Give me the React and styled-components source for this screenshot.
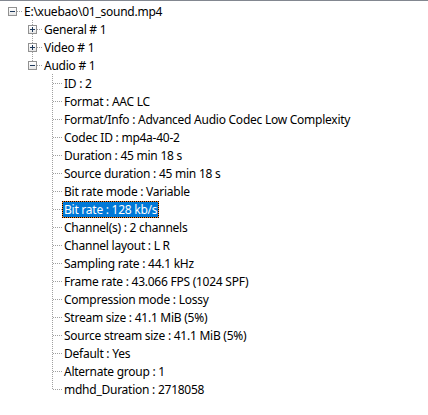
import React from 'react';
import styled, { createGlobalStyle, css } from 'styled-components';

const GlobalStyle = createGlobalStyle`
  html, body {
    margin: 0;
    padding: 0;
    background: #fff;
  }
`;

const LINE = '#a0a0a0';
const vDots = `repeating-linear-gradient(to bottom, ${LINE} 0 1px, transparent 1px 2px)`;
const hDots = `repeating-linear-gradient(to right, ${LINE} 0 1px, transparent 1px 2px)`;

const TreeView = styled.div`
  box-sizing: border-box;
  width: 428px;
  height: 415px;
  border-top: 1px solid #828790;
  padding: 1px 0 0 2px;
  background: #fff;
  font-family: "Segoe UI", "Noto Sans", "Open Sans", sans-serif;
  font-size: 12px;
  letter-spacing: -0.25px;
  color: #000;
  overflow: hidden;
`;

const Row = styled.div`
  display: flex;
  align-items: center;
  height: 18px;
  padding-left: ${(p) => p.$level * 20}px;
`;

const Gutter = styled.span`
  flex: none;
  width: 20px;
  height: 18px;
  display: flex;
  align-items: center;
  justify-content: center;
  ${(p) => {
    const layers = [`${hDots} 11px 9px / 9px 1px no-repeat`];
    if (!p.$root) {
      layers.push(`${vDots} 10px 0 / 1px ${p.$last ? 10 : 18}px no-repeat`);
    }
    return css`background: ${layers.join(', ')};`;
  }}
`;

const Expander = styled.span`
  position: relative;
  box-sizing: border-box;
  width: 9px;
  height: 9px;
  margin-left: 1px;
  border: 1px solid #919191;
  background: linear-gradient(to bottom, #fff, #e6e6e6);

  &::before {
    content: '';
    position: absolute;
    left: 1px;
    top: 3px;
    width: 5px;
    height: 1px;
    background: #1e395b;
  }

  ${(p) =>
    !p.$open &&
    css`
      &::after {
        content: '';
        position: absolute;
        left: 3px;
        top: 1px;
        width: 1px;
        height: 5px;
        background: #1e395b;
      }
    `}
`;

const Label = styled.span`
  box-sizing: border-box;
  height: 17px;
  line-height: 17px;
  padding: 0 2px;
  white-space: nowrap;

  ${(p) =>
    p.$selected &&
    css`
      background: #0078d7;
      color: #fff;
      outline: 1px dotted #000;
      outline-offset: -1px;
      box-shadow: inset 0 0 0 1px #ff8a28;
    `}
`;

const audioFields = [
  'ID : 2',
  'Format : AAC LC',
  'Format/Info : Advanced Audio Codec Low Complexity',
  'Codec ID : mp4a-40-2',
  'Duration : 45 min 18 s',
  'Source duration : 45 min 18 s',
  'Bit rate mode : Variable',
  'Bit rate : 128 kb/s',
  'Channel(s) : 2 channels',
  'Channel layout : L R',
  'Sampling rate : 44.1 kHz',
  'Frame rate : 43.066 FPS (1024 SPF)',
  'Compression mode : Lossy',
  'Stream size : 41.1 MiB (5%)',
  'Source stream size : 41.1 MiB (5%)',
  'Default : Yes',
  'Alternate group : 1',
  'mdhd_Duration : 2718058',
];

const tree = {
  label: 'E:\\xuebao\\01_sound.mp4',
  open: true,
  children: [
    { label: 'General # 1', open: false, children: [] },
    { label: 'Video # 1', open: false, children: [] },
    {
      label: 'Audio # 1',
      open: true,
      children: audioFields.map((label) => ({ label })),
    },
  ],
};

function TreeNode({ node, level, last, root }) {
  const hasChildren = !!node.children;
  const kids = node.open && node.children ? node.children : [];
  return (
    <>
      <Row $level={level}>
        <Gutter $root={root} $last={last}>
          {hasChildren && <Expander $open={node.open} />}
        </Gutter>
        <Label $selected={node.label === 'Bit rate : 128 kb/s'}>{node.label}</Label>
      </Row>
      {kids.map((child, i) => (
        <TreeNode
          key={child.label}
          node={child}
          level={level + 1}
          last={i === kids.length - 1}
        />
      ))}
    </>
  );
}

export default function App() {
  return (
    <>
      <GlobalStyle />
      <TreeView>
        <TreeNode node={tree} level={0} root last />
      </TreeView>
    </>
  );
}
